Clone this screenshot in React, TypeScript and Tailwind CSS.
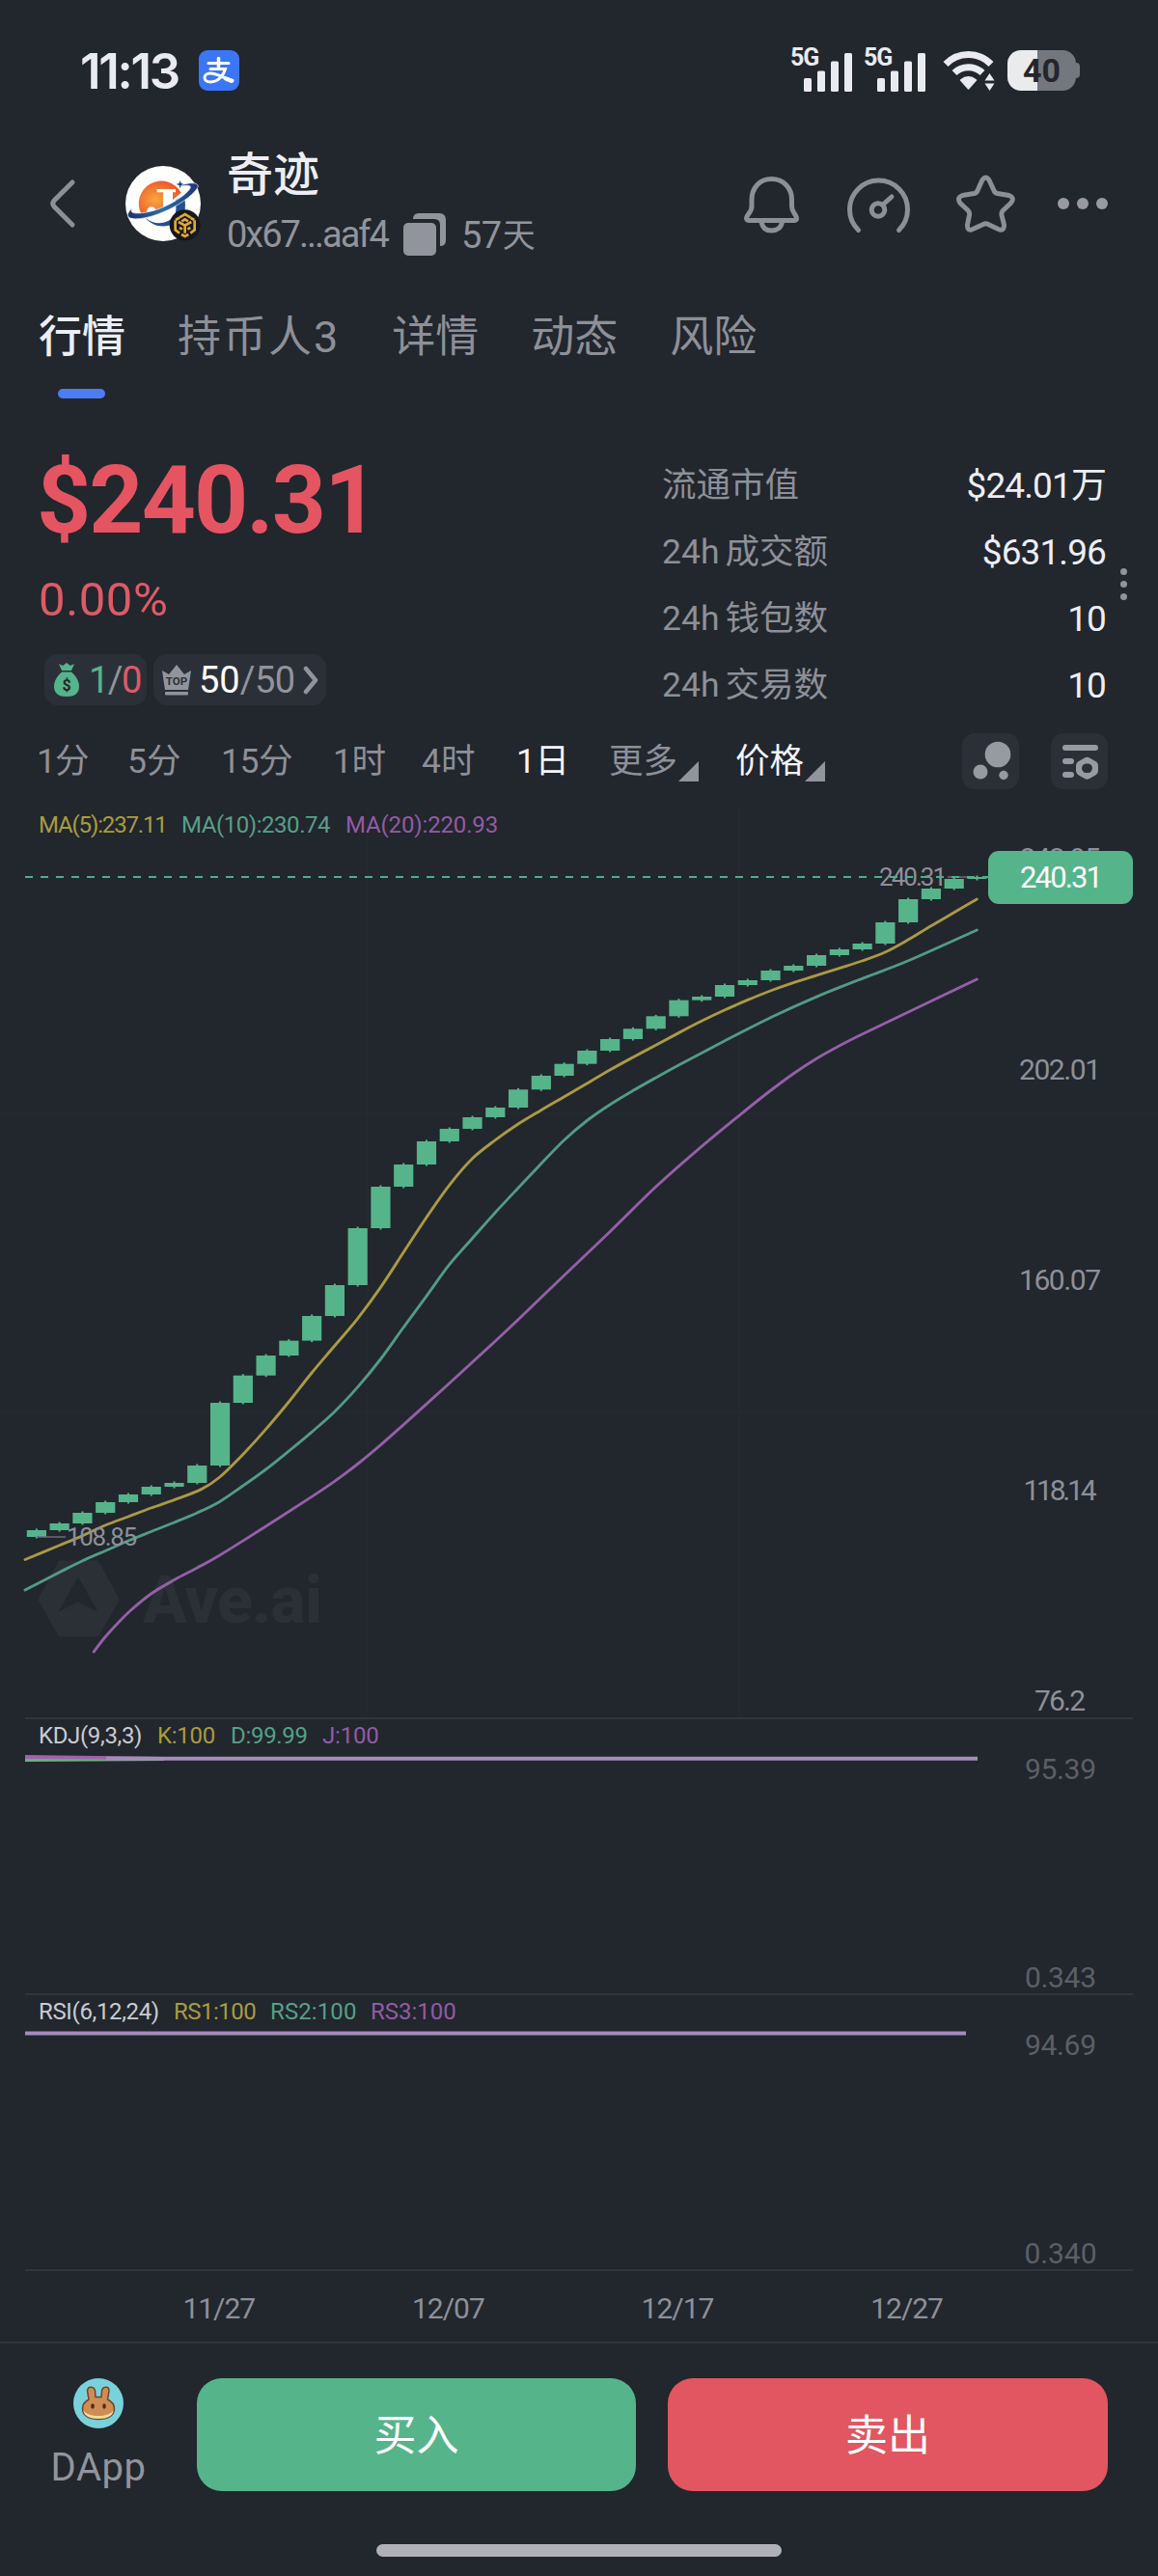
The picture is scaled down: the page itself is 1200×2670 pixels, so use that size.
import { ReactNode } from "react";
import clsx from "clsx";

const FONT = "font-['Roboto','Noto_Sans_CJK_SC',sans-serif]";

const TABS = ["行情", "持币人3", "详情", "动态", "风险"];

const STATS = [
  { label: "流通市值", value: "$24.01万" },
  { label: "24h", suffix: "成交额", value: "$631.96" },
  { label: "24h", suffix: "钱包数", value: "10" },
  { label: "24h", suffix: "交易数", value: "10" },
];

// Candle edges, from the first open to the last close
const EDGES = [
  1593, 1586, 1579, 1568, 1557, 1549, 1541, 1537, 1519, 1454, 1425.7, 1405,
  1389.6, 1364, 1332, 1273, 1230, 1207, 1183, 1170, 1158, 1148, 1129.3, 1115,
  1102.7, 1089, 1077, 1066.3, 1053.3, 1036.7, 1033, 1021, 1016, 1006, 1001, 990,
  984, 978, 956, 932, 921, 911, 909,
];
const FIRST_X = 37.9;
const STEP = 23.77;

type Point = [number, number];

const MA5: Point[] = [
  [26, 1616.5], [61, 1602], [85.3, 1591.8], [109, 1581], [132.8, 1572],
  [156.5, 1563], [180.6, 1554.6], [208.6, 1543.6], [227.7, 1531],
  [251.8, 1507.5], [275.5, 1481.4], [299.3, 1453], [323, 1423],
  [346.7, 1395], [370.5, 1366.8], [394.2, 1334.6], [418, 1298.3],
  [442, 1261.7], [465.7, 1228.3], [489.3, 1201], [513.3, 1181.7],
  [537, 1165], [560.7, 1150.7], [584.3, 1137], [608.3, 1123], [632, 1109],
  [655.7, 1096], [679.7, 1083.3], [703.3, 1070.6], [727, 1058.3],
  [750.7, 1047], [774.3, 1036.7], [798.3, 1027], [822, 1018.6],
  [845.7, 1011.2], [869.7, 1003.6], [893.3, 996], [917, 987],
  [940.7, 974.3], [964.3, 960], [988.3, 946], [1012.3, 932],
];

const MA10: Point[] = [
  [26, 1648], [61, 1630], [85, 1618], [109, 1607.5], [133, 1597],
  [156.5, 1587.5], [180.6, 1578], [204.4, 1568], [227.7, 1556.4],
  [251.8, 1540], [275.5, 1523], [299.3, 1504], [323, 1484.3],
  [346.7, 1463.2], [370.5, 1437.9], [394.2, 1409], [418, 1376],
  [442, 1343.3], [465.7, 1310.7], [489.3, 1283.7], [513.3, 1256.7],
  [537, 1231.3], [560.7, 1206.3], [584.3, 1182], [608.3, 1161.5],
  [632, 1145], [655.7, 1130.6], [679.7, 1117], [703.3, 1104], [750.7, 1079],
  [800, 1054], [845.7, 1033.3], [893.3, 1014.3], [940.7, 996],
  [1012.3, 964],
];

const MA20: Point[] = [
  [97.2, 1712], [109, 1696.8], [122.5, 1682], [135, 1669.5], [156.5, 1652],
  [180.6, 1637.5], [204.4, 1625], [227.7, 1612], [275.5, 1582],
  [323, 1551.4], [346.7, 1535.4], [370.5, 1517.5], [394.2, 1497.9],
  [418, 1476.8], [465.4, 1434], [512.8, 1390.5], [537, 1367.7],
  [584.3, 1322.3], [632, 1276.7], [679.7, 1230], [727, 1188.3],
  [774.3, 1149.5], [798.3, 1130.5], [822, 1113], [845.7, 1097.5],
  [869.7, 1084], [893.3, 1072], [940.7, 1049.3], [1012.3, 1015],
];

// Catmull-Rom through the points, written as cubic beziers
function smooth(points: Point[]) {
  let d = `M${points[0][0]} ${points[0][1]}`;
  for (let i = 0; i < points.length - 1; i++) {
    const p0 = points[i - 1] ?? points[i];
    const p1 = points[i];
    const p2 = points[i + 1];
    const p3 = points[i + 2] ?? p2;
    const c1 = [p1[0] + (p2[0] - p0[0]) / 6, p1[1] + (p2[1] - p0[1]) / 6];
    const c2 = [p2[0] - (p3[0] - p1[0]) / 6, p2[1] - (p3[1] - p1[1]) / 6];
    d += `C${c1[0]} ${c1[1]} ${c2[0]} ${c2[1]} ${p2[0]} ${p2[1]}`;
  }
  return d;
}

function Signal() {
  return (
    <div className="flex h-[45px] w-[76px] shrink-0 items-end">
      <span className="mr-[-15px] self-start text-[25px] leading-[19px] font-bold tracking-[-1px]">
        5G
      </span>
      <svg width="50" height="40" viewBox="0 0 50 40" fill="#e9ebf1">
        <rect x="0" y="26" width="8" height="14" rx="1.5" />
        <rect x="14" y="18.500" width="8" height="21.500" rx="1.5" />
        <rect x="28" y="8.500" width="8" height="31.500" rx="1.5" />
        <rect x="42" y="0" width="8" height="40" rx="1.500" />
      </svg>
    </div>
  );
}

function StatusBar() {
  return (
    <div className="flex h-[146px] items-center text-[#e9ebf1]">
      <span className="ml-[83px] w-[123px] text-[51px] leading-none font-semibold tracking-[-2.300px] font-['Inter']">
        11:13
      </span>
      <svg width="42" height="42" viewBox="0 0 42 42">
        <rect width="42" height="42" rx="9" fill="#3b76f6" />
        <g stroke="#fff" fill="none" strokeLinecap="round">
          <path d="M10 13.500H31" strokeWidth="3" />
          <path d="M20.500 8.500V19" strokeWidth="3.500" />
          <path d="M12 19.500H27.500C26 25 21 33 12 33C4 33 4 24 12 24C20 24 27 30 35 31.500" strokeWidth="3" />
          <path d="M28 29.500L34 31.800" strokeWidth="4.500" />
        </g>
      </svg>
      <div className="ml-auto flex items-center">
        <div className="mr-[1px] -mt-[2px] flex">
          <Signal />
          <Signal />
        </div>
        <svg className="ml-[5px]" width="55" height="42" viewBox="0 0 55 42" fill="none">
          <g stroke="#e9ebf1" strokeWidth="7">
            <path d="M3 14.500C16 1.200 37 1.200 50 14.500" />
            <path d="M12 23.500C20 15.800 33 15.800 41 23.500" />
          </g>
          <path d="M18.500 31Q26.500 24.500 34.500 31L26.500 40Z" fill="#e9ebf1" stroke="#e9ebf1" strokeWidth="1.500" strokeLinejoin="round" />
          <path d="M48.500 21.500L56 31L48.500 42L41 32Z" fill="#22262d" />
          <path d="M48.500 24L53.500 31.500H43.500ZM43.500 34.500H53.500L48.500 42Z" fill="#e9ebf1" />
        </svg>
        <div className="mr-[81px] ml-[12px] flex items-center">
          <div className="flex h-[42px] w-[71px] items-center justify-center rounded-[14px] bg-linear-to-r from-[#e9ebec] from-43% to-[#74777d] to-43% text-[34px] leading-none font-bold text-[#22262d]">
            40
          </div>
          <div className="h-[16px] w-[4px] rounded-r-[4px] bg-[#74777d]" />
        </div>
      </div>
    </div>
  );
}

function TokenLogo() {
  return (
    <svg width="78" height="78" viewBox="30 36 234 234" className="overflow-visible">
      <defs>
        <radialGradient id="sun" cx="0.4" cy="0.55" r="0.7">
          <stop offset="0" stopColor="#f9a63c" />
          <stop offset="0.9" stopColor="#e9542a" />
        </radialGradient>
        <linearGradient id="orbit" x1="0" x2="1">
          <stop offset="0" stopColor="#1d2f68" />
          <stop offset="0.5" stopColor="#2c70ae" />
          <stop offset="1" stopColor="#1c3478" />
        </linearGradient>
      </defs>
      <circle cx="147" cy="153" r="117" fill="#fefefc" />
      <path d="M80 187A70 70 0 1 1 203 119L150 165Z" fill="url(#sun)" />
      <path d="M212 128C222 170 214 200 180 216C145 232 110 220 92 197C122 222 158 216 178 196C192 180 186 160 186 142Z" fill="#24508f" />
      <path
        d="M128 108H186V118H177V170C177 206 112 207 97 180C95 160 120 158 124 172C130 186 147 184 147 170V118H128Z"
        fill="#fff"
      />
      <path
        d="M52 166C20 196 44 206 88 198C150 187 232 140 254 104C262 90 240 84 206 95L204 99C228 94 238 98 228 110C206 138 140 174 90 181C54 186 42 182 52 166Z"
        fill="url(#orbit)"
        stroke="#fff"
        strokeWidth="2"
      />
      <path d="M200 81L203 90L212 93L203 96L200 106L197 96L188 93L197 90Z" fill="#1c3c80" />
      <circle cx="215" cy="220" r="48" fill="#15171b" />
      <g fill="none" stroke="#e0a934" strokeWidth="8">
        <path d="M198 196L215 186L232 196M185 205V235L198 245M245 205V235L232 245M204 249L215 255L226 249" />
        <path d="M186 204L198 197M244 204L232 197" />
        <path d="M195 210L215 221L235 210M215 221V245M198 228L207 233M232 228L223 233" />
        <path d="M205 208L215 202L225 208" />
      </g>
    </svg>
  );
}

function Header() {
  return (
    <header className="flex h-[130px] items-center">
      <svg className="ml-[50px]" width="30" height="52" viewBox="0 0 30 52" fill="none">
        <path d="M25 4L6 23Q3.500 26 6 29L25 48" stroke="#8c8f96" strokeWidth="5" strokeLinecap="round" />
      </svg>
      <div className="ml-[50px]">
        <TokenLogo />
      </div>
      <div className="ml-[27px]">
        <div className="-mt-[1px] text-[48px] leading-[56px] font-medium text-[#eceef5]">奇迹</div>
        <div className="mt-[9px] flex h-[48px] items-center text-[38px] leading-none text-[#91949c]">
          <span className="w-[183px] tracking-[-2px]">0x67...aaf4</span>
          <svg width="44" height="44" viewBox="0 0 44 44" fill="#91949c">
            <rect x="0" y="10" width="34" height="34" rx="5" />
            <path d="M10 6Q10 0 16 0H37Q44 0 44 7V28Q44 34 38 34V12Q38 6 32 6Z" />
          </svg>
          <span className="ml-[16px] pt-[1px] tracking-[-0.500px]">57</span>
          <span className="ml-[1px] pt-[1px] text-[34px]">天</span>
        </div>
      </div>
      <svg className="mt-[1px] ml-auto" width="382" height="66" viewBox="766 178 382 66" fill="none" stroke="#8c8f96" strokeWidth="5" strokeLinecap="round" strokeLinejoin="round">
        <path d="M799.500 184.500C787 184.500 779 194 779 206V213C779 219 774 221 773.500 225Q773.500 227.500 777 227.500H822.500Q826 227.500 825.500 225C825 221 820.500 219 820.500 213V206C820.500 194 812 184.500 799.500 184.500Z" />
        <path d="M789 229C790 235 794 238 799.500 238S809.500 235 810.500 229" />
        <path d="M889.500 237.500A30 30 0 1 1 931.500 237.500" />
        <circle cx="910" cy="216.500" r="6.800" />
        <path d="M915 211L924 203" />
        <path d="M1017.800 185.800Q1021.500 180 1025 185.800L1030 196.500Q1031 199 1033.500 199.500L1045.500 201.500Q1052 204 1047.500 209.500L1039.500 217Q1037.500 219 1038 222L1040.500 232Q1040.500 239 1034.500 236.500L1024 231.500Q1021.500 230 1019 231.500L1008 236.500Q1002 239 1002.500 232L1004.500 222Q1005 219 1003 217L995 209.500Q991 204 997.500 201.500L1009.500 199.500Q1012 199 1013 196.500Z" />
        <g fill="#989aa0" stroke="none">
          <circle cx="1102" cy="210" r="6" />
          <circle cx="1122" cy="210" r="6" />
          <circle cx="1142" cy="210" r="6" />
        </g>
      </svg>
      <div className="w-[52px]" />
    </header>
  );
}

function Tabs() {
  return (
    <nav className="flex h-[144px] items-center gap-[54px] pl-[40px] text-[45px] leading-none">
      {TABS.map((tab, i) => (
        <div
          key={tab}
          className={clsx(
            "relative flex h-full items-center pt-[3px]",
            i === 0 ? "font-medium text-[#eceef5]" : "text-[#8d9098]",
            i === 1 && "tracking-[2px]",
          )}
        >
          {tab}
          {i === 0 && (
            <span className="absolute bottom-[7px] left-[20px] h-[10px] w-[49px] rounded-full bg-[#4d7df2]" />
          )}
        </div>
      ))}
    </nav>
  );
}

function Badge({ children, className }: { children: ReactNode; className: string }) {
  return (
    <div className={clsx("flex h-[53px] items-center rounded-[14px] bg-[#2b3038] text-[38px] leading-none", className)}>
      {children}
    </div>
  );
}

function PriceSummary() {
  return (
    <section className="relative flex h-[330px]">
      <div className="ml-[40px] w-[646px]">
        <div className="mt-[49px] -ml-[2px] h-[100px] text-[98px] leading-[100px] font-bold tracking-[-1.900px] text-[#e45561]">
          $240.31
        </div>
        <div className="mt-[28px] h-[50px] text-[49px] leading-[50px] tracking-[0.600px] text-[#dd5b66]">
          0.00%
        </div>
        <div className="mt-[31px] ml-[6px] flex gap-[7px]">
          <Badge className="w-[106px] pl-[9px]">
            <svg width="28" height="36" viewBox="0 0 28 36" fill="#56b48b">
              <path d="M6 1L10 3L14 0L18 3L22 1L19 8H9Z" />
              <path d="M9 9.500H19C24 14 27 19 27 24.500C27 32 22 35 14 35S1 32 1 24.500C1 19 4 14 9 9.500Z" />
              <text x="14" y="29" textAnchor="middle" fontSize="16" fontWeight="700" fill="#22262d">$</text>
            </svg>
            <span className="ml-[9px] tracking-[-1.500px] text-[#56b48b]">
              1<span className="text-[#91949c]">/</span>
              <span className="text-[#e05a66]">0</span>
            </span>
          </Badge>
          <Badge className="w-[179px] pl-[8px]">
            <svg width="32" height="34" viewBox="0 0 32 34" fill="#91949c">
              <path d="M1 7L8 11L16 1L24 11L31 7L28 27H4Z" strokeLinejoin="round" />
              <rect x="4" y="29" width="24" height="3.500" rx="1" />
              <text x="16" y="22" textAnchor="middle" fontSize="11.500" fontWeight="700" fill="#2b3038">TOP</text>
            </svg>
            <span className="ml-[7px] text-white">50</span>
            <span className="tracking-[-0.500px] text-[#91949c]">/50</span>
            <svg className="ml-[8px]" width="18" height="32" viewBox="0 0 18 32" fill="none">
              <path d="M3 4L13 16L3 28" stroke="#91949c" strokeWidth="4.500" strokeLinecap="round" strokeLinejoin="round" />
            </svg>
          </Badge>
        </div>
      </div>
      <div className="mt-[49px] flex w-[460px] flex-col">
        {STATS.map((stat) => (
          <div key={stat.label + stat.suffix} className="flex h-[69px] items-center justify-between text-[35.500px] leading-none">
            <span className="flex items-center text-[#8d9098]">
              <span>{stat.label}</span>
              {stat.suffix && <span className="ml-[6px]">{stat.suffix}</span>}
            </span>
            <span className="text-[37px] tracking-[-0.900px] text-[#eceef5]">{stat.value}</span>
          </div>
        ))}
      </div>
      <div className="absolute top-[169px] left-[1161px] flex flex-col gap-[6px]">
        <i className="size-[7px] rounded-full bg-[#91949c]" />
        <i className="size-[7px] rounded-full bg-[#91949c]" />
        <i className="size-[7px] rounded-full bg-[#91949c]" />
      </div>
    </section>
  );
}

function Corner() {
  return (
    <svg className="mt-[18px] ml-[1px]" width="21" height="21" viewBox="0 0 21 21" fill="#91949c">
      <path d="M0 21L21 0V21Z" />
    </svg>
  );
}

function Intervals() {
  return (
    <div className="flex h-[78px] items-center pt-[2px] text-[35.500px] leading-none text-[#8d9098]">
      <span className="ml-[38px] w-[94px] tracking-[-1px]">1分</span>
      <span className="w-[97px]">5分</span>
      <span className="w-[116px] tracking-[-0.500px]">15分</span>
      <span className="w-[92px] tracking-[-0.500px]">1时</span>
      <span className="w-[98px]">4时</span>
      <span className="w-[96px] tracking-[-0.500px] text-[#f3f5fb]">1日</span>
      <span className="flex w-[131px] items-center">
        更多
        <Corner />
      </span>
      <span className="flex items-center text-[#f3f5fb]">
        价格
        <Corner />
      </span>
      <div className="mr-[52px] ml-auto -mt-[2px] flex gap-[33px]">
        <div className="flex h-[58px] w-[59px] items-center justify-center rounded-[13px] bg-[#2b3038]">
          <svg width="59" height="58" viewBox="0 0 59 58" fill="#969aa1">
            <circle cx="37" cy="22" r="13.300" />
            <circle cx="19" cy="40" r="7.500" />
            <circle cx="43" cy="43.500" r="4.700" />
          </svg>
        </div>
        <div className="flex h-[58px] w-[59px] items-center justify-center rounded-[13px] bg-[#2b3038]">
          <svg width="59" height="58" viewBox="0 0 59 58" fill="#969aa1">
            <rect x="12" y="12" width="37" height="6" rx="3" />
            <rect x="12" y="26" width="12" height="6" rx="3" />
            <rect x="12" y="40" width="12" height="6" rx="3" />
            <path
              fillRule="evenodd"
              d="M35 25.500Q37.500 24 40 25.500L47 29.500Q49 31 49 33.500V39Q49 41.500 47 43L40 47Q37.500 48.500 35 47L28 43Q26 41.500 26 39V33.500Q26 31 28 29.500ZM37.500 31.500A4.800 4.800 0 1 0 37.500 41A4.800 4.800 0 1 0 37.500 31.500Z"
            />
          </svg>
        </div>
      </div>
    </div>
  );
}

interface LegendItem {
  text: string;
  className: string;
}

function Legend({ items, className }: { items: LegendItem[]; className: string }) {
  return (
    <div className={clsx("absolute flex text-[24px] leading-none", className)}>
      {items.map((item) => (
        <span key={item.text} className={item.className}>
          {item.text}
        </span>
      ))}
    </div>
  );
}

function MainChart() {
  return (
    <div className="relative h-[952px]">
      <Legend
        className="top-[15px] left-[40px]"
        items={[
          { text: "MA(5):237.11", className: "w-[148px] tracking-[-1.150px] text-[#a99c41]" },
          { text: "MA(10):230.74", className: "w-[170px] tracking-[-0.450px] text-[#56a087]" },
          { text: "MA(20):220.93", className: "tracking-[-0.150px] text-[#935ba4]" },
        ]}
      />
      <svg className="block" width="1200" height="952" viewBox="0 828 1200 952" fill="none">
        <path d="M381 836V1779M766 836V1779M0 1154H1200M0 1464H1200" stroke="#24282f" strokeWidth="2" />

        {/* Watermark */}
        <path
          fillRule="evenodd"
          d="M62 1619H101L122 1658L101 1695H62L41 1658ZM81 1631L57 1674L81 1662L105 1674Z"
          fill="#2b2f36"
          stroke="#2b2f36"
          strokeWidth="3"
          strokeLinejoin="round"
        />
        <text x="148" y="1682" fontSize="68" fontWeight="800" textLength="186" fill="#2b2f36">
          Ave.ai
        </text>

        {EDGES.slice(1).map((close, i) => {
          const open = EDGES[i];
          const x = FIRST_X + i * STEP;
          return (
            <g key={i} fill="#56b48b">
              <rect x={x - 10.1} y={close} width="20.200" height={Math.max(open - close, 1.5)} />
              <rect x={x - 1} y={close - 1.5} width="2" height={open - close + 3} />
            </g>
          );
        })}

        <g strokeWidth="2.900" strokeLinecap="round">
          <path d={smooth(MA5)} stroke="#aa9a45" />
          <path d={smooth(MA10)} stroke="#529c83" />
          <path d={smooth(MA20)} stroke="#945fa8" />
        </g>

        {/* High and low marks */}
        <path d="M38 1593H68M982 909H1003" stroke="#6b6e75" strokeWidth="1.500" />
        <g fontSize="26" fill="#8d9098">
          <text x="69" y="1602" textLength="73">108.85</text>
          <text x="911" y="918" textLength="70">240.31</text>
        </g>
        <path d="M26 909H1024" stroke="#4fae89" strokeWidth="2" strokeDasharray="8 8" />

        <g fontSize="30" fill="#8d9098" textAnchor="middle">
          <text x="1098.500" y="900" textLength="84">243.95</text>
          <text x="1098.500" y="1119" textLength="85">202.01</text>
          <text x="1098.500" y="1337" textLength="85">160.07</text>
          <text x="1098.500" y="1555" textLength="76">118.14</text>
          <text x="1098.500" y="1773" textLength="53">76.2</text>
        </g>

        <rect x="1024" y="882" width="150" height="55" rx="11" fill="#56b48b" />
        <text x="1100" y="920" fontSize="31" textAnchor="middle" textLength="86" fill="#fff">
          240.31
        </text>
      </svg>
    </div>
  );
}

function KdjChart() {
  return (
    <div className="relative ml-[26px] h-[286px] w-[1148px] border-t-2 border-[#31353c]">
      <Legend
        className="top-[5px] left-[14px]"
        items={[
          { text: "KDJ(9,3,3)", className: "w-[123px] tracking-[-0.350px] text-[#c9ccd3]" },
          { text: "K:100", className: "w-[76px] tracking-[-0.300px] text-[#a99c41]" },
          { text: "D:99.99", className: "w-[95px] tracking-[-0.300px] text-[#56a087]" },
          { text: "J:100", className: "tracking-[-0.200px] text-[#935ba4]" },
        ]}
      />
      <svg className="block overflow-visible" width="1148" height="284" viewBox="26 1782 1148 284">
        <path d="M26 1820L170 1821V1825L26 1826Z" fill="#6fb27c" />
        <path d="M26 1819L170 1821V1824L26 1823Z" fill="#a45fb0" />
        <path d="M110 1822.800H1013" stroke="#a58cba" strokeWidth="4" />
        <g fontSize="30" fill="#5c5f66" textAnchor="middle">
          <text x="1099" y="1844" textLength="74">95.39</text>
          <text x="1099" y="2060" textLength="74">0.343</text>
        </g>
      </svg>
    </div>
  );
}

function RsiChart() {
  return (
    <div className="relative ml-[26px] h-[286px] w-[1148px] border-t-2 border-[#31353c]">
      <Legend
        className="top-[5px] left-[14px]"
        items={[
          { text: "RSI(6,12,24)", className: "w-[140px] tracking-[-0.350px] text-[#c9ccd3]" },
          { text: "RS1:100", className: "w-[100px] tracking-[-0.500px] text-[#a99c41]" },
          { text: "RS2:100", className: "w-[104px] tracking-[0.100px] text-[#56a087]" },
          { text: "RS3:100", className: "text-[#935ba4]" },
        ]}
      />
      <svg className="block overflow-visible" width="1148" height="284" viewBox="26 2068 1148 284">
        <path d="M26 2107.500H1001" stroke="#a58cba" strokeWidth="4" />
        <g fontSize="30" fill="#5c5f66" textAnchor="middle">
          <text x="1099" y="2130" textLength="74">94.69</text>
          <text x="1099" y="2346" textLength="75">0.340</text>
        </g>
      </svg>
    </div>
  );
}

function DateAxis() {
  return (
    <div className="ml-[26px] flex h-[75px] w-[1148px] items-center border-t-2 border-[#31353c] pt-[5px] pl-[82px] text-center text-[30px] leading-none tracking-[-1px] text-[#8d9098]">
      {["11/27", "12/07", "12/17", "12/27"].map((date) => (
        <span key={date} className="w-[237.600px]">
          {date}
        </span>
      ))}
    </div>
  );
}

function BunnyLogo() {
  return (
    <svg width="52" height="52" viewBox="0 0 52 52">
      <circle cx="26" cy="26" r="26" fill="#78d2dc" />
      <path
        d="M16 22L14.500 13Q15 9 18.500 9.200Q22 9.500 22.500 13L23 19.500H29L29.500 13Q30 9.500 33.500 9.200Q37 9 37 13L35.500 22Q42.500 25.500 42.500 31.500C42.500 39 35 42.500 26 42.500S9.500 39 9.500 31.500Q9.500 25.500 16 22Z"
        fill="#cf8c54"
        stroke="#6d4526"
        strokeWidth="1.500"
      />
      <path d="M10.500 33C14 41 38 41 41.500 33C41.500 39 35 42 26 42S10.500 39 10.500 33Z" fill="#f6dc98" />
      <ellipse cx="20" cy="29" rx="1.800" ry="2.800" fill="#4b2c17" />
      <ellipse cx="32" cy="29" rx="1.800" ry="2.800" fill="#4b2c17" />
    </svg>
  );
}

function BottomBar() {
  return (
    <footer className="flex grow flex-col border-t-2 border-[#31353c]">
      <div className="mt-[36px] flex h-[117px] text-[44px] leading-none text-white">
        <div className="flex w-[204px] flex-col items-center">
          <BunnyLogo />
          <span className="mt-[21px] text-[40px] tracking-[0.500px] text-[#91949c]">DApp</span>
        </div>
        <button className="w-[455px] rounded-[26px] bg-[#56b48b] pt-[2px]">买入</button>
        <button className="ml-[33px] w-[456px] rounded-[26px] bg-[#e15660] pt-[2px]">卖出</button>
      </div>
      <div className="mx-auto mt-[55px] h-[13px] w-[420px] rounded-full bg-[#afb1b7]" />
    </footer>
  );
}

export default function App() {
  return (
    <main className={clsx("flex h-[2670px] w-[1200px] flex-col overflow-hidden bg-[#22262d]", FONT)}>
      <StatusBar />
      <Header />
      <Tabs />
      <PriceSummary />
      <Intervals />
      <MainChart />
      <KdjChart />
      <RsiChart />
      <DateAxis />
      <BottomBar />
    </main>
  );
}
